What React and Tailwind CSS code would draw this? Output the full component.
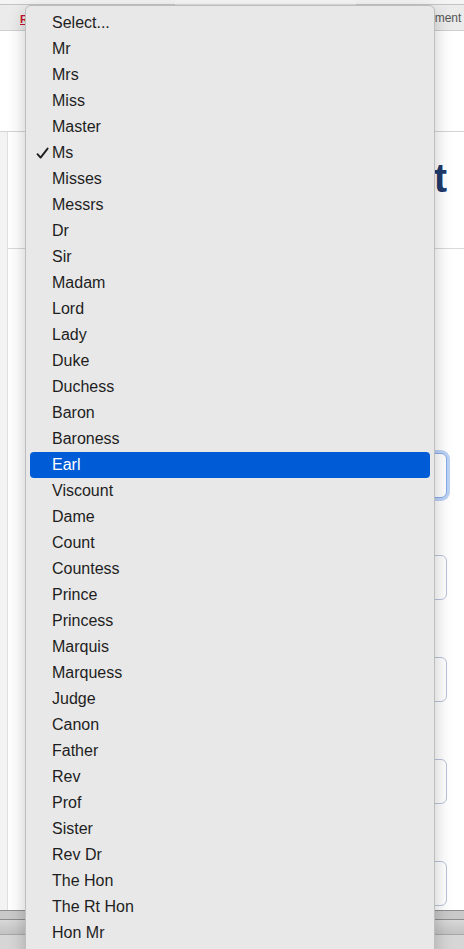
import React from 'react';

const titles = [
  'Select...', 'Mr', 'Mrs', 'Miss', 'Master', 'Ms', 'Misses', 'Messrs', 'Dr', 'Sir',
  'Madam', 'Lord', 'Lady', 'Duke', 'Duchess', 'Baron', 'Baroness', 'Earl', 'Viscount',
  'Dame', 'Count', 'Countess', 'Prince', 'Princess', 'Marquis', 'Marquess', 'Judge',
  'Canon', 'Father', 'Rev', 'Prof', 'Sister', 'Rev Dr', 'The Hon', 'The Rt Hon', 'Hon Mr',
];

const checked = 'Ms';
const active = 'Earl';

function Check() {
  return (
    <svg width="13" height="13" viewBox="0 0 13 13" className="absolute left-[6px] top-[7px]">
      <path d="M1.5 7.2 L4.6 10.6 L11.6 1.6" fill="none" stroke="currentColor" strokeWidth="1.9" strokeLinecap="round" strokeLinejoin="round" />
    </svg>
  );
}

function Field({ focused }) {
  return (
    <div className="flex flex-col">
      <div className="h-[57px]" />
      <div
        className={
          focused
            ? 'h-[45px] ml-[20px] rounded-[6px] border border-[#86aee9] bg-white ring-[3px] ring-[#bcd3f6]'
            : 'h-[45px] ml-[20px] rounded-[6px] border border-[#b9c3da] bg-white'
        }
      />
    </div>
  );
}

export default function App() {
  return (
    <div className="relative w-[464px] h-[949px] overflow-hidden bg-white flex flex-col" style={{ fontFamily: '"Liberation Sans", Arial, sans-serif' }}>
      {/* browser tab strip + toolbar */}
      <div className="h-[31px] shrink-0 flex flex-col bg-[#ebebeb] border-b border-[#cfcfcf]">
        <div className="h-[5px] flex">
          <div className="w-[175px] bg-[#f4f4f4] border-b border-[#c4c4c4]" />
          <div className="flex-1 bg-[#f7f7f7] border-b border-[#dedede]" />
          <div className="w-[108px] bg-[#f4f4f4] border-b border-[#c4c4c4]" />
        </div>
        <div className="flex-1 flex items-center overflow-hidden">
          <div className="w-[428px] shrink-0 pl-[20px]">
            <span className="text-[11px] font-bold text-[#c8102e] underline leading-none">R</span>
          </div>
          <span className="text-[12px] text-[#555] whitespace-nowrap">ement I</span>
        </div>
      </div>

      {/* page header */}
      <div className="h-[101px] shrink-0 bg-white border-b border-[#d4d4d4]" />

      {/* content */}
      <div className="flex-1 flex min-h-0">
        <div className="w-[8px] shrink-0 bg-[#f3f3f3] border-r border-[#e0e0e0]" />
        <div className="flex-1 flex flex-col bg-white pr-[17px]">
          <div className="h-[117px] shrink-0 flex items-start justify-end pt-[22px] border-b border-[#d9d9d9] -mr-[17px] pr-[17px]">
            <h1 className="text-[40px] leading-[48px] font-semibold text-[#1f3a6d] whitespace-nowrap">Add New Contact</h1>
          </div>
          <div className="flex flex-col pt-[147px]">
            <Field focused />
            <Field />
            <Field />
            <Field />
            <Field />
          </div>
        </div>
      </div>

      {/* bottom chrome */}
      <div className="h-[39px] shrink-0 flex flex-col">
        <div className="h-px bg-[#8e8e8e]" />
        <div className="h-[8px] bg-[#c9c9c9]" />
        <div className="h-px bg-[#8c8c8c]" />
        <div className="h-[14px] bg-gradient-to-b from-[#d8d8d8] to-[#c2c2c2]" />
        <div className="h-px bg-[#a8a8a8]" />
        <div className="flex-1 bg-[#d6d6d6]" />
      </div>

      {/* native select popup */}
      <div className="absolute left-[25px] top-[5px] w-[410px] h-[980px] rounded-[6px] border border-[#bdbdbd] bg-[#e8e8e8] shadow-[0_6px_18px_rgba(0,0,0,0.22)] pt-[4px]">
        {titles.map((t) => (
          <div
            key={t}
            className={
              t === active
                ? 'relative h-[26px] mx-[4px] rounded-[4px] bg-[#005bd6] pl-[22px] flex items-center text-[16px] text-white'
                : 'relative h-[26px] mx-[4px] pl-[22px] flex items-center text-[16px] text-[#1e1e1e]'
            }
          >
            {t === checked && <Check />}
            {t}
          </div>
        ))}
      </div>
    </div>
  );
}
